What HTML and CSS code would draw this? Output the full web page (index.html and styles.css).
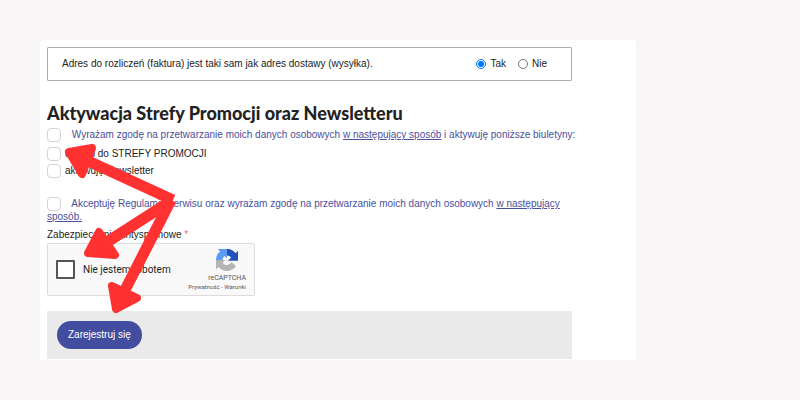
FILE: index.html
```html
<!DOCTYPE html>
<html lang="pl">
<head>
  <meta charset="UTF-8">
  <title>Rejestracja</title>
  <link rel="stylesheet" href="styles.css">
</head>
<body>

  <main class="card">
    <form class="form">
      <div class="address">
        <span class="address-text" id="address-label">Adres do rozliczeń (faktura) jest taki sam jak adres dostawy (wysyłka).</span>
        <div class="options" role="radiogroup" aria-labelledby="address-label">
          <label class="option"><input type="radio" name="same" value="1" checked>Tak</label>
          <label class="option"><input type="radio" name="same" value="0">Nie</label>
        </div>
      </div>

      <h1>Aktywacja Strefy Promocji oraz Newsletteru</h1>

      <div class="consent one-line">
        <input type="checkbox" id="consent">
        <label for="consent">Wyrażam zgodę na przetwarzanie moich danych osobowych <a href="#">w następujący sposób</a> i aktywuję poniższe biuletyny:</label>
      </div>
      <div class="bulletins">
        <div class="bulletin">
          <input type="checkbox" id="promo">
          <label for="promo">dostęp do STREFY PROMOCJI</label>
        </div>
        <div class="bulletin">
          <input type="checkbox" id="newsletter">
          <label for="newsletter">aktywuję Newsletter</label>
        </div>
      </div>
      <div class="consent">
        <input type="checkbox" id="terms">
        <label for="terms">Akceptuję Regulamin serwisu oraz wyrażam zgodę na przetwarzanie moich danych osobowych <a href="#">w następujący sposób.</a></label>
      </div>

      <p class="antispam">Zabezpieczenie antyspamowe <span class="required">*</span></p>
      <div class="captcha">
        <input type="checkbox" id="robot">
        <label for="robot">Nie jestem robotem</label>
        <div class="captcha-brand">
          <svg class="captcha-logo" viewBox="0 0 64 64" aria-hidden="true">
            <path fill="#2450b8" d="M64 34V5l-7 7A32 32 0 0 0 30 0v19a15 15 0 0 1 14 6l-9 9z"/>
            <path fill="#5b9af5" d="M32 0H5l7 7A32 32 0 0 0 0 34h19a15 15 0 0 1 6-14l7 7z"/>
            <path fill="#b4b4b4" d="M0 32v27l7-7A32 32 0 0 0 58 50L45 38a15 15 0 0 1-26 2l8-8z"/>
          </svg>
          <span class="captcha-name">reCAPTCHA</span>
          <span class="captcha-links"><a href="#">Prywatność</a> - <a href="#">Warunki</a></span>
        </div>
      </div>

      <div class="actions">
        <button type="submit">Zarejestruj się</button>
      </div>
    </form>

    <!-- Arrows pointing at the required fields -->
    <svg class="arrows" width="120" height="180" viewBox="60 140 120 180" aria-hidden="true">
      <g fill="none" stroke-width="11">
        <path d="M86 160L173 200"/>
        <path d="M104 244L171 201"/>
        <path d="M124 292L171 200"/>
      </g>
      <g stroke-width="8" stroke-linejoin="round">
        <path d="M69 152L92 148L82 174Z"/>
        <path d="M88 253L99 232L115 255Z"/>
        <path d="M116 309L112 286L137 298Z"/>
      </g>
    </svg>
  </main>

</body>
</html>
```

FILE: styles.css
```css
* {
  box-sizing: border-box;
}
body {
  margin: 0;
  padding: 40px;
  background: #f8f6f7;
  color: #222;
  font-family: "Liberation Sans", Arial, sans-serif;
  font-size: 10px;
  line-height: 12px;
}
.card {
  position: relative;
  max-width: 596px;
  padding: 7px 7px 1px;
  background: #fff;
  border-radius: 4px 4px 0 0;
}
.form {
  max-width: 525px;
}
.address {
  display: flex;
  align-items: center;
  justify-content: space-between;
  padding: 10px 24px 10px 14px;
  border: 1px solid #a9abac;
  border-radius: 1px;
}
.options {
  display: flex;
  gap: 12px;
}
.option {
  display: flex;
  align-items: center;
  gap: 4px;
}
.option input {
  width: 10px;
  height: 10px;
  margin: 0;
}
h1 {
  margin: 21px 0 4px;
  font-family: Lato, sans-serif;
  font-size: 18px;
  font-weight: 900;
  line-height: 22px;
}
input[type="checkbox"] {
  flex: none;
  width: 14px;
  height: 14px;
  margin: 0;
  appearance: none;
  background: #fff;
  border: 1px solid #d4d4d8;
  border-radius: 4px;
  vertical-align: middle;
}
a {
  color: inherit;
}
.consent {
  color: #4a509c;
}
.consent input[type="checkbox"] {
  margin-right: 8px;
}
.one-line {
  white-space: nowrap;
}
.bulletins {
  display: grid;
  gap: 3px;
  margin: 5px 0 19px;
}
.bulletin {
  display: flex;
  align-items: center;
  gap: 4px;
}
.antispam {
  margin: 6px 0 2px;
}
.required {
  color: #e8667a;
}
.captcha {
  display: flex;
  align-items: center;
  width: 208px;
  height: 53px;
  padding: 0 8px;
  background: #f9f9f9;
  border: 1px solid #dcdcdc;
  border-radius: 2px;
  font-family: Roboto, sans-serif;
}
.captcha input[type="checkbox"] {
  width: 19px;
  height: 19px;
  margin-right: 8px;
  border: 2px solid #555;
  border-radius: 1px;
}
.captcha-brand {
  display: flex;
  flex-direction: column;
  align-items: flex-end;
  margin-left: auto;
  color: #555;
}
.captcha-logo {
  width: 22px;
  height: 22px;
  margin: 0 8px 2px 0;
}
.captcha-name {
  font-size: 7px;
  line-height: 10px;
}
.captcha-links {
  font-size: 6px;
  line-height: 7px;
}
.captcha-links a {
  text-decoration: none;
}
.actions {
  margin-top: 15px;
  padding: 10px;
  background: #eaeaea;
}
button {
  padding: 8px 11px;
  border: none;
  border-radius: 14px;
  background: #434da0;
  color: #fff;
  font: inherit;
  cursor: pointer;
}
.arrows {
  position: absolute;
  top: 100px;
  left: 20px;
  fill: #ff3131;
  stroke: #ff3131;
  pointer-events: none;
}
```
